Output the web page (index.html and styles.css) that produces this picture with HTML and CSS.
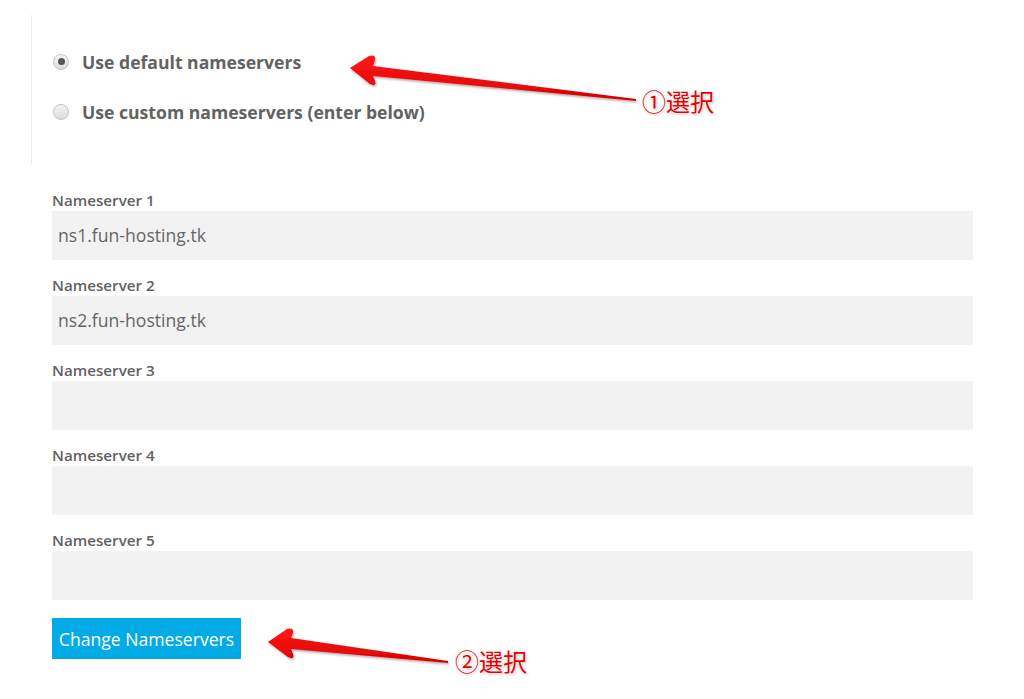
FILE: index.html
```html
<!DOCTYPE html>
<html lang="en">
<head>
  <meta charset="UTF-8">
  <title>Nameservers</title>
  <link rel="stylesheet" href="styles.css">
</head>
<body>
  <div class="page">
    <div class="ns-choice">
      <label class="choice">
        <span class="radio checked"></span>
        <span>Use default nameservers</span>
      </label>
      <label class="choice">
        <span class="radio"></span>
        <span>Use custom nameservers (enter below)</span>
      </label>
    </div>

    <form class="ns-form">
      <div class="field">
        <label>Nameserver 1</label>
        <div class="input">ns1.fun-hosting.tk</div>
      </div>
      <div class="field">
        <label>Nameserver 2</label>
        <div class="input">ns2.fun-hosting.tk</div>
      </div>
      <div class="field">
        <label>Nameserver 3</label>
        <div class="input"></div>
      </div>
      <div class="field">
        <label>Nameserver 4</label>
        <div class="input"></div>
      </div>
      <div class="field">
        <label>Nameserver 5</label>
        <div class="input"></div>
      </div>
      <button type="button" class="btn">Change Nameservers</button>
    </form>

    <!-- annotations -->
    <svg class="arrows" width="1024" height="699" viewBox="0 0 1024 699">
      <defs>
        <linearGradient id="red" x1="0" y1="0" x2="0" y2="1">
          <stop offset="0" stop-color="#ff1a1a"/>
          <stop offset="1" stop-color="#d90000"/>
        </linearGradient>
        <filter id="shadow" x="-10%" y="-50%" width="120%" height="200%">
          <feDropShadow dx="1" dy="1.5" stdDeviation="1" flood-color="#000" flood-opacity="0.35"/>
        </filter>
      </defs>
      <path fill="url(#red)" filter="url(#shadow)" d="M350,68 L369,56 Q376,54 375,60 L373,66 L636,99 L636,101 L373,76 L375,81 Q377,87 370,84 Z"/>
      <path fill="url(#red)" filter="url(#shadow)" d="M268,642 L287,629 Q294,627 293,633 L291,638 L448,661 L448,663 L291,649 L293,654 Q295,660 288,657 Z"/>
    </svg>
    <div class="note note-1">①選択</div>
    <div class="note note-2">②選択</div>
  </div>
</body>
</html>
```

FILE: styles.css
```css
body {
  margin: 0;
  background: #fff;
  font-family: "Open Sans", "Noto Sans", sans-serif;
  color: #626262;
}

.page {
  position: relative;
  width: 1024px;
  height: 699px;
  overflow: hidden;
}

.ns-choice {
  margin: 15px 0 0 31px;
  height: 149px;
  border-left: 1px solid #ececec;
  padding: 34px 0 0 21px;
  box-sizing: border-box;
}

.choice {
  display: flex;
  align-items: center;
  gap: 13px;
  height: 25px;
  margin-bottom: 25px;
  font-size: 17.6px;
  font-weight: 700;
}

.radio {
  width: 14px;
  height: 14px;
  border-radius: 50%;
  border: 1px solid #c4c4c4;
  background: linear-gradient(#f4f4f4, #dcdcdc);
  position: relative;
  flex: none;
}

.radio.checked::after {
  content: '';
  position: absolute;
  left: 3.5px;
  top: 3.5px;
  width: 7px;
  height: 7px;
  border-radius: 50%;
  background: #555;
}

.ns-form {
  margin: 26px 0 0 52px;
  width: 921px;
}

.field {
  margin-bottom: 15px;
}

.field label {
  display: block;
  font-size: 15.2px;
  font-weight: 600;
  line-height: 20px;
  margin-bottom: 1px;
}

.input {
  height: 49px;
  background: #f2f2f2;
  padding: 0 6px;
  font-size: 17.6px;
  line-height: 49px;
  color: #666;
}

.btn {
  margin-top: 3px;
  width: 189px;
  height: 41px;
  padding: 0;
  border: none;
  background: #03abe6;
  color: #fff;
  font-family: inherit;
  font-size: 17.6px;
}

.arrows {
  position: absolute;
  left: 0;
  top: 0;
  pointer-events: none;
}

.note {
  position: absolute;
  font-family: "Noto Sans CJK JP", sans-serif;
  font-size: 24px;
  line-height: 30px;
  color: #e60000;
  text-shadow: 0 0 2px #fff, 0 0 2px #fff, 1px 1px 3px rgba(0, 0, 0, 0.35);
}

.note-1 { left: 642px; top: 86px; }
.note-2 { left: 455px; top: 646px; }
```
